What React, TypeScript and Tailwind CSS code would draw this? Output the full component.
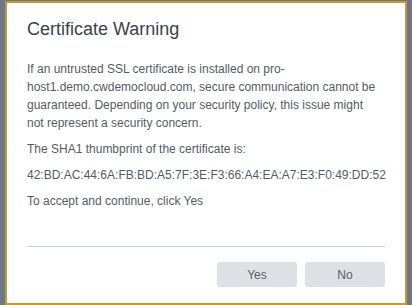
import React from 'react';

const CertificateWarning: React.FC = () => {
  const paragraphs = [
    'If an untrusted SSL certificate is installed on pro-host1.demo.cwdemocloud.com, secure communication cannot be guaranteed. Depending on your security policy, this issue might not represent a security concern.',
    'The SHA1 thumbprint of the certificate is:',
    '42:BD:AC:44:6A:FB:BD:A5:7F:3E:F3:66:A4:EA:A7:E3:F0:49:DD:52',
    'To accept and continue, click Yes',
  ];

  return (
    <div
      className="w-[412px] h-[305px] bg-[#6e7884] pt-[1px] pl-[5px] overflow-hidden"
      style={{ fontFamily: '"Liberation Sans", Arial, sans-serif' }}
    >
      <div className="w-[402px] h-[304px] bg-white border-2 border-[#c8963b] px-[20px] pt-[14px] flex flex-col">
        <h2 className="text-[18px] leading-[24px] text-[#3a424c] font-normal">Certificate Warning</h2>

        <div className="mt-[19px] w-[353px] text-[12px] leading-[18px] text-[#525c67] flex flex-col gap-[8px]">
          {paragraphs.map((p, i) => (
            <p key={i} className={i === 2 ? 'whitespace-nowrap' : ''}>{p}</p>
          ))}
        </div>

        {/* footer */}
        <div className="mt-[36px] border-t border-[#c8cdd4] w-[358px]" />
        <div className="mt-[15px] w-[358px] flex justify-end gap-[8px]">
          <button className="w-[80px] h-[25px] rounded-[3px] bg-[#dde1e6] text-[12px] text-[#56606b]">Yes</button>
          <button className="w-[80px] h-[25px] rounded-[3px] bg-[#dde1e6] text-[12px] text-[#56606b]">No</button>
        </div>
      </div>
    </div>
  );
};

export default function App() {
  return <CertificateWarning />;
}
